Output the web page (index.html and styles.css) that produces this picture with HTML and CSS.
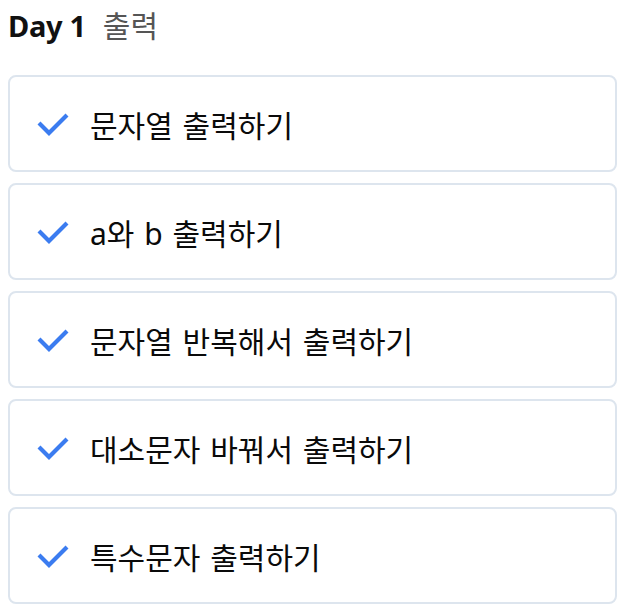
FILE: index.html
```html
<!DOCTYPE html>
<html lang="ko">
<head>
<meta charset="utf-8">
<link rel="stylesheet" href="styles.css">
</head>
<body>
<div class="page">
  <h1 class="title"><span class="day">Day 1</span><span class="topic">출력</span></h1>
  <ul class="list">
    <li class="item"><svg class="check" viewBox="0 0 34 26" width="34" height="26"><path d="M3 12 L13 22 L31 4" fill="none" stroke="#3b7cf0" stroke-width="4.2"/></svg><span class="label">문자열 출력하기</span></li>
    <li class="item"><svg class="check" viewBox="0 0 34 26" width="34" height="26"><path d="M3 12 L13 22 L31 4" fill="none" stroke="#3b7cf0" stroke-width="4.2"/></svg><span class="label">a와 b 출력하기</span></li>
    <li class="item"><svg class="check" viewBox="0 0 34 26" width="34" height="26"><path d="M3 12 L13 22 L31 4" fill="none" stroke="#3b7cf0" stroke-width="4.2"/></svg><span class="label">문자열 반복해서 출력하기</span></li>
    <li class="item"><svg class="check" viewBox="0 0 34 26" width="34" height="26"><path d="M3 12 L13 22 L31 4" fill="none" stroke="#3b7cf0" stroke-width="4.2"/></svg><span class="label">대소문자 바꿔서 출력하기</span></li>
    <li class="item"><svg class="check" viewBox="0 0 34 26" width="34" height="26"><path d="M3 12 L13 22 L31 4" fill="none" stroke="#3b7cf0" stroke-width="4.2"/></svg><span class="label">특수문자 출력하기</span></li>
  </ul>
</div>
</body>
</html>
```
FILE: styles.css
```css
html, body {
  margin: 0;
  padding: 0;
  background: #ffffff;
}
.page {
  padding: 6px 3px 0 8px;
  font-family: "Noto Sans", "Noto Sans CJK KR", sans-serif;
}
.title {
  margin: 0;
  height: 40px;
  display: flex;
  align-items: center;
  gap: 17px;
  font-size: 29px;
  line-height: 40px;
}
.day {
  font-weight: 700;
  color: #111111;
  letter-spacing: -0.3px;
}
.topic {
  font-weight: 400;
  color: #555555;
  font-size: 30px;
}
.list {
  list-style: none;
  margin: 29px 0 0 0;
  padding: 0;
  display: flex;
  flex-direction: column;
  gap: 11px;
}
.item {
  box-sizing: border-box;
  height: 97px;
  border: 2px solid #dde5ee;
  border-radius: 8px;
  display: flex;
  align-items: center;
  padding-left: 26px;
  gap: 20px;
}
.check {
  flex: none;
  display: block;
}
.label {
  font-size: 30px;
  font-weight: 400;
  word-spacing: 2px;
  color: #0a0a0a;
}
```
